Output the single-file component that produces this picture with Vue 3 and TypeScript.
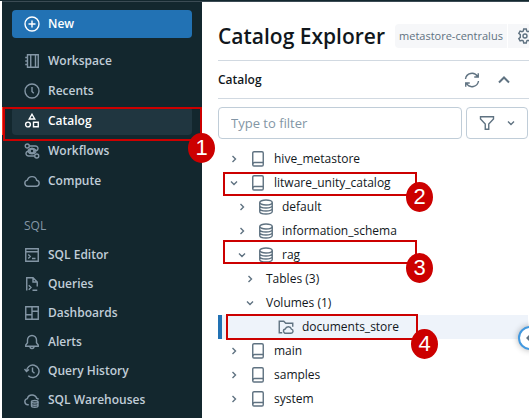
<script setup lang="ts">
import { ref } from 'vue'

interface NavItem {
  label: string
  icon: string
  mark?: number
}

interface TreeNode {
  label: string
  level: number
  icon?: string
  state: 'open' | 'closed' | 'leaf'
  count?: number
  mark?: number
}

const icons: Record<string, string> = {
  workspace:
    '<path d="M3.5 1.75h10.75v12.5H3.5zM6.75 1.75v12.5M1.25 4.5h2.25M1.25 8h2.25M1.25 11.5h2.25M11.5 1.75v12.5"/>',
  recents: '<circle cx="8" cy="8" r="7"/><path d="M8 4v4.5l1.75 1.75"/>',
  catalog:
    '<path d="M8 1.25 10.75 6h-5.5z"/><circle cx="4" cy="11.5" r="2.4"/><path d="M9.5 9.25h4.75v4.5H9.5z"/>',
  workflows:
    '<circle cx="3.25" cy="3" r="2"/><circle cx="12.75" cy="13" r="2"/><circle cx="8" cy="8" r="2"/><path d="M5.25 3h6.25a2.5 2.5 0 0 1 2 4c-1 1-2 1-3.500 1M10.750 13H4.500a2.500 2.500 0 0 1-2-4c1-1 2-1 3.500-1M4 7.500C6 4.500 10 4.500 12 7.500M4 8.500c2 3 6 3 8 0"/>',
  compute:
    '<path d="M3.9 13.25h8.3a3 3 0 0 0 .5-5.95A4.8 4.8 0 0 0 3.4 7.1a3.1 3.1 0 0 0 .5 6.15z"/>',
  editor: '<path d="M1.75 1.75h12.5v12.5H1.75zM1.75 4.75h12.5M4.25 7.5l2 2-2 2M8 11.5h3.5"/>',
  queries:
    '<path d="M2.75 14.5V1.75H9L13.25 6v4.5M9 1.75V6h4.25M4.75 9.25l2.25 2.25-2.25 2.25M8.5 14.25h4.75"/>',
  dashboards: '<path d="M1.75 1.75h12.5v12.5H1.75zM8 1.75v12.5M1.75 9.75H8M8 6.25h6.25"/>',
  alerts:
    '<path d="M8 1.5a4.5 4.5 0 0 0-4.5 4.5v2.75L1.75 11v1.25h12.5V11L12.5 8.75V6A4.5 4.5 0 0 0 8 1.5zM6 12.5a2 2 0 0 0 4 0"/>',
  history: '<path d="M2.5 8.5a6.25 6.25 0 1 1 1.8 4.2M.5 6l2 2.5L5 6.5M8.5 4.5v4l2 1.75"/>',
  warehouses:
    '<path d="M4.75 12.75H3.9a3.1 3.1 0 0 1-.5-6.15A4.8 4.8 0 0 1 12.6 6.3c.9.2 1.5.6 1.9 1.2"/><ellipse cx="10.75" cy="9.75" rx="3.25" ry="1.25"/><path d="M7.5 9.75V14c0 1.7 6.5 1.7 6.5 0V9.75M7.5 12c0 1.7 6.5 1.7 6.5 0"/>',
  book: '<rect x="2.75" y=".75" width="10.5" height="14.250" rx="1.250"/><path d="M2.750 13.500c0-1.250.6-2 1.750-2h8.750"/>',
  schema:
    '<ellipse cx="8" cy="3.5" rx="6.25" ry="2.5"/><path d="M1.75 3.5v9c0 3.3 12.5 3.3 12.5 0v-9M1.75 6.5c0 3.3 12.5 3.3 12.5 0M1.75 9.5c0 3.3 12.5 3.3 12.5 0"/>',
  volume:
    '<path d="M4.25 13.75h-3V2.25h4.5l2 2h7v3.5"/><path d="M8 14.25h5a2.1 2.1 0 0 0 .4-4.15 3.2 3.2 0 0 0-6.1-.1A2.15 2.15 0 0 0 8 14.25z"/>',
}

const mainNav: NavItem[] = [
  { label: 'Workspace', icon: 'workspace' },
  { label: 'Recents', icon: 'recents' },
  { label: 'Catalog', icon: 'catalog', mark: 1 },
  { label: 'Workflows', icon: 'workflows' },
  { label: 'Compute', icon: 'compute' },
]

const sqlNav: NavItem[] = [
  { label: 'SQL Editor', icon: 'editor' },
  { label: 'Queries', icon: 'queries' },
  { label: 'Dashboards', icon: 'dashboards' },
  { label: 'Alerts', icon: 'alerts' },
  { label: 'Query History', icon: 'history' },
  { label: 'SQL Warehouses', icon: 'warehouses' },
]

const nodes: TreeNode[] = [
  { label: 'hive_metastore', level: 0, icon: 'book', state: 'closed' },
  { label: 'litware_unity_catalog', level: 0, icon: 'book', state: 'open', mark: 2 },
  { label: 'default', level: 1, icon: 'schema', state: 'closed' },
  { label: 'information_schema', level: 1, icon: 'schema', state: 'closed' },
  { label: 'rag', level: 1, icon: 'schema', state: 'open', mark: 3 },
  { label: 'Tables', level: 2, state: 'closed', count: 3 },
  { label: 'Volumes', level: 2, state: 'open', count: 1 },
  { label: 'documents_store', level: 3, icon: 'volume', state: 'leaf', mark: 4 },
  { label: 'main', level: 0, icon: 'book', state: 'closed' },
  { label: 'samples', level: 0, icon: 'book', state: 'closed' },
  { label: 'system', level: 0, icon: 'book', state: 'closed' },
]

const filter = ref('')
</script>

<template>
  <div class="page">
    <nav class="sidebar" aria-label="Primary">
      <button class="new" type="button">
        <svg class="icon" viewBox="0 0 16 16"><circle cx="8" cy="8" r="7" /><path d="M8 4.5v7M4.5 8h7" /></svg>
        New
      </button>
      <ul class="nav">
        <li v-for="item in mainNav" :key="item.label" class="nav-row" :class="{ current: item.mark }">
          <a href="#" class="nav-link" :class="{ active: item.mark }">
            <svg class="icon" viewBox="0 0 16 16" v-html="icons[item.icon]"></svg>
            {{ item.label }}
          </a>
          <div v-if="item.mark" class="mark mark-1"><span class="badge">{{ item.mark }}</span></div>
        </li>
      </ul>
      <h2 class="section">SQL</h2>
      <ul class="nav compact">
        <li v-for="item in sqlNav" :key="item.label" class="nav-row">
          <a href="#" class="nav-link">
            <svg class="icon" viewBox="0 0 16 16" v-html="icons[item.icon]"></svg>
            {{ item.label }}
          </a>
        </li>
      </ul>
    </nav>

    <main class="main">
      <header class="head">
        <h1>Catalog Explorer</h1>
        <span class="chip">metastore-centralus</span>
        <button class="gear" type="button" aria-label="Settings">
          <svg class="icon" viewBox="0 0 16 16">
            <path
              d="M6.700 1h2.600l.4 2 1.300.7 1.900-.7 1.300 2.300-1.500 1.300v2.800l1.500 1.300-1.300 2.300-1.900-.7-1.300.7-.4 2H6.700l-.4-2-1.300-.7-1.900.7-1.300-2.300 1.500-1.300V6.600L1.800 5.300 3.100 3l1.900.7L6.300 3z"
            />
            <circle cx="8" cy="8" r="2" />
          </svg>
        </button>
      </header>

      <div class="bar">
        <h2>Catalog</h2>
        <button class="tool" type="button" aria-label="Refresh">
          <svg class="icon" viewBox="0 0 16 16">
            <path d="M1.500 7a6.500 6.500 0 0 1 12-2.500M14.250 1.250V5h-4M14.500 9a6.500 6.500 0 0 1-12 2.500M1.750 14.750V11h4" />
          </svg>
        </button>
        <button class="tool" type="button" aria-label="Collapse">
          <svg class="icon bold" viewBox="0 0 16 16"><path d="M3 10.500 8 5.500l5 5" /></svg>
        </button>
      </div>

      <div class="search">
        <input v-model="filter" type="text" placeholder="Type to filter" aria-label="Type to filter" />
        <button class="filter" type="button" aria-label="Filter options">
          <svg class="icon" viewBox="0 0 16 16"><path d="M1.500 1.750h13V4L9.750 9v5.250h-3.500V9L1.500 4z" /></svg>
          <svg class="caret-icon" viewBox="0 0 8 8"><path d="M1 2.500l3 3 3-3" /></svg>
        </button>
      </div>

      <ul class="tree" role="tree">
        <li
          v-for="node in nodes"
          :key="node.label"
          class="node"
          :class="['level-' + node.level, { selected: node.state === 'leaf' }]"
          role="treeitem"
        >
          <button v-if="node.state !== 'leaf'" class="caret" type="button" :aria-label="'Toggle ' + node.label">
            <svg class="caret-icon" viewBox="0 0 8 8">
              <path :d="node.state === 'open' ? 'M1 2.500l3 3 3-3' : 'M2.500 1l3 3-3 3'" />
            </svg>
          </button>
          <svg v-if="node.icon" class="icon" viewBox="0 0 16 16" v-html="icons[node.icon]"></svg>
          <span class="name">{{ node.label }}<small v-if="node.count"> ({{ node.count }})</small></span>
          <div v-if="node.mark" class="mark" :class="'mark-' + node.mark">
            <span class="badge">{{ node.mark }}</span>
          </div>
        </li>
      </ul>

      <button class="collapse" type="button" aria-label="Hide panel">
        <svg class="caret-icon" viewBox="0 0 8 8"><path d="M8 4H1M4 1 1 4l3 3" /></svg>
      </button>
    </main>
  </div>
</template>

<style>
body {
  overflow: hidden;
}
</style>

<style scoped>
.page {
  display: flex;
  box-sizing: border-box;
  min-height: 100vh;
  padding-left: 2px;
  border-top: 1px solid #13272e;
  background: #fff;
  color: #11171c;
  font: 12px/20px "Open Sans", "Noto Sans", sans-serif;
}
h1,
h2,
ul {
  margin: 0;
  padding: 0;
  list-style: none;
}
button {
  padding: 0;
  border: 0;
  background: none;
  color: inherit;
  font: inherit;
}
.icon,
.caret-icon {
  flex: none;
  fill: none;
  stroke: currentColor;
  stroke-width: 1.4;
}
.icon {
  width: 16px;
  height: 16px;
}
.caret-icon {
  width: 8px;
  height: 8px;
}
.bold {
  stroke-width: 2;
}

.sidebar {
  flex: 0 0 200px;
  box-sizing: border-box;
  padding-top: 8px;
  border-top: 1px solid #3b4b54;
  background: #13272e;
  color: #8396a5;
}
.new,
.nav-link {
  display: flex;
  align-items: center;
  gap: 8px;
  box-sizing: border-box;
  height: 28px;
  margin: 0 10px;
  padding: 0 12px;
  border-radius: 4px;
  font-weight: 600;
}
.new {
  width: 180px;
  margin-bottom: 9px;
  background: #2272b4;
  color: #fff;
}
.nav {
  display: flex;
  flex-direction: column;
  gap: 2px;
}
.compact {
  gap: 1px;
}
.nav-row {
  position: relative;
}
.current::before {
  content: "";
  position: absolute;
  inset: 0 auto 0 0;
  width: 1px;
  background: #ff3621;
}
.nav-link {
  color: #c0cdd8;
  text-decoration: none;
}
.nav-link .icon {
  color: #8396a5;
}
.nav-link.active,
.nav-link.active .icon {
  color: #fff;
}
.nav-link.active {
  background: #203640;
}
.section {
  margin: 21px 22px 5px;
  font-size: 12px;
  font-weight: 400;
  line-height: 20px;
}

.main {
  position: relative;
  flex: 1;
  min-width: 0;
  padding-left: 16px;
  border-top: 1px solid #3b4b54;
}
.head {
  display: flex;
  align-items: center;
  height: 59px;
  padding-top: 10px;
  box-sizing: border-box;
  border-bottom: 1px solid #d1d9e1;
}
h1 {
  margin-right: 10px;
  font-size: 21px;
  font-weight: 600;
  line-height: 28px;
  white-space: nowrap;
}
.chip,
.gear {
  flex: none;
  height: 24px;
  background: #f6f7f9;
  color: #5f7281;
}
.chip {
  margin-right: 1px;
  padding: 0 4px;
  border-radius: 4px 0 0 4px;
  font-size: 11px;
  line-height: 24px;
}
.gear {
  display: flex;
  align-items: center;
  padding: 0 9px;
}
.bar {
  display: flex;
  align-items: center;
  gap: 16px;
  height: 38px;
  padding-right: 17px;
  box-sizing: border-box;
  border-bottom: 1px solid #d1d9e1;
  color: #5f7281;
}
.bar h2 {
  flex: 1;
  color: #11171c;
  font-size: 12px;
  font-weight: 600;
}
.tool {
  display: flex;
}
.search {
  display: flex;
  gap: 4px;
  padding: 8px 1px 8px 0;
}
.search input,
.filter {
  box-sizing: border-box;
  height: 32px;
  border: 1px solid #c0cdd8;
  border-radius: 4px;
}
.search input {
  flex: 1;
  min-width: 0;
  padding: 0 12px;
  background: #fff;
  color: #11171c;
  font: inherit;
  font-size: 13px;
}
.search input::placeholder {
  color: #8396a5;
  opacity: 1;
}
.filter {
  display: flex;
  align-items: center;
  justify-content: space-between;
  width: 62px;
  padding: 0 12px;
  color: #5f7281;
}

.node {
  position: relative;
  display: flex;
  align-items: center;
  height: 24px;
  padding-left: 8px;
}
.level-1 {
  padding-left: 16px;
}
.level-2 {
  padding-left: 24px;
}
.level-3 {
  padding-left: 56px;
}
.selected {
  margin-right: 1px;
  border-left: 4px solid #2272b4;
  background: #eef3fa;
}
.caret {
  display: flex;
  align-items: center;
  justify-content: center;
  width: 16px;
  height: 16px;
  margin-right: 8px;
}
.node > .icon {
  margin-right: 8px;
}
.node > .icon,
.caret {
  color: #5f7281;
}
small {
  font-size: 12px;
}

.mark {
  position: absolute;
  z-index: 1;
  box-sizing: border-box;
  border: 2px solid #c00;
  pointer-events: none;
}
.mark-1 {
  inset: 0 0 -6px 1px;
}
.mark-2,
.mark-3 {
  top: 1px;
  left: 5px;
  width: 194px;
  height: 24px;
}
.mark-3 {
  top: -3px;
}
.mark-4 {
  top: -1px;
  left: 4px;
  width: 192px;
  height: 26px;
}
.badge {
  position: absolute;
  right: -18px;
  bottom: -18px;
  width: 27px;
  height: 30px;
  border-radius: 50%;
  background: #c00;
  color: #fff;
  font: 22px/30px "Liberation Sans", Arial, sans-serif;
  text-align: center;
}
.mark-1 .badge {
  right: -15px;
  bottom: -24px;
}
.mark-3 .badge {
  bottom: -21px;
}
.mark-4 .badge {
  right: -22px;
  bottom: -21px;
}
.collapse {
  position: absolute;
  top: 324px;
  right: -13px;
  display: flex;
  align-items: center;
  justify-content: center;
  width: 24px;
  height: 24px;
  border: 2px solid #4299e0;
  box-sizing: border-box;
  border-radius: 50%;
  background: #fff;
  box-shadow: 0 0 6px rgba(0, 0, 0, 0.3);
  color: #5f7281;
}
</style>
